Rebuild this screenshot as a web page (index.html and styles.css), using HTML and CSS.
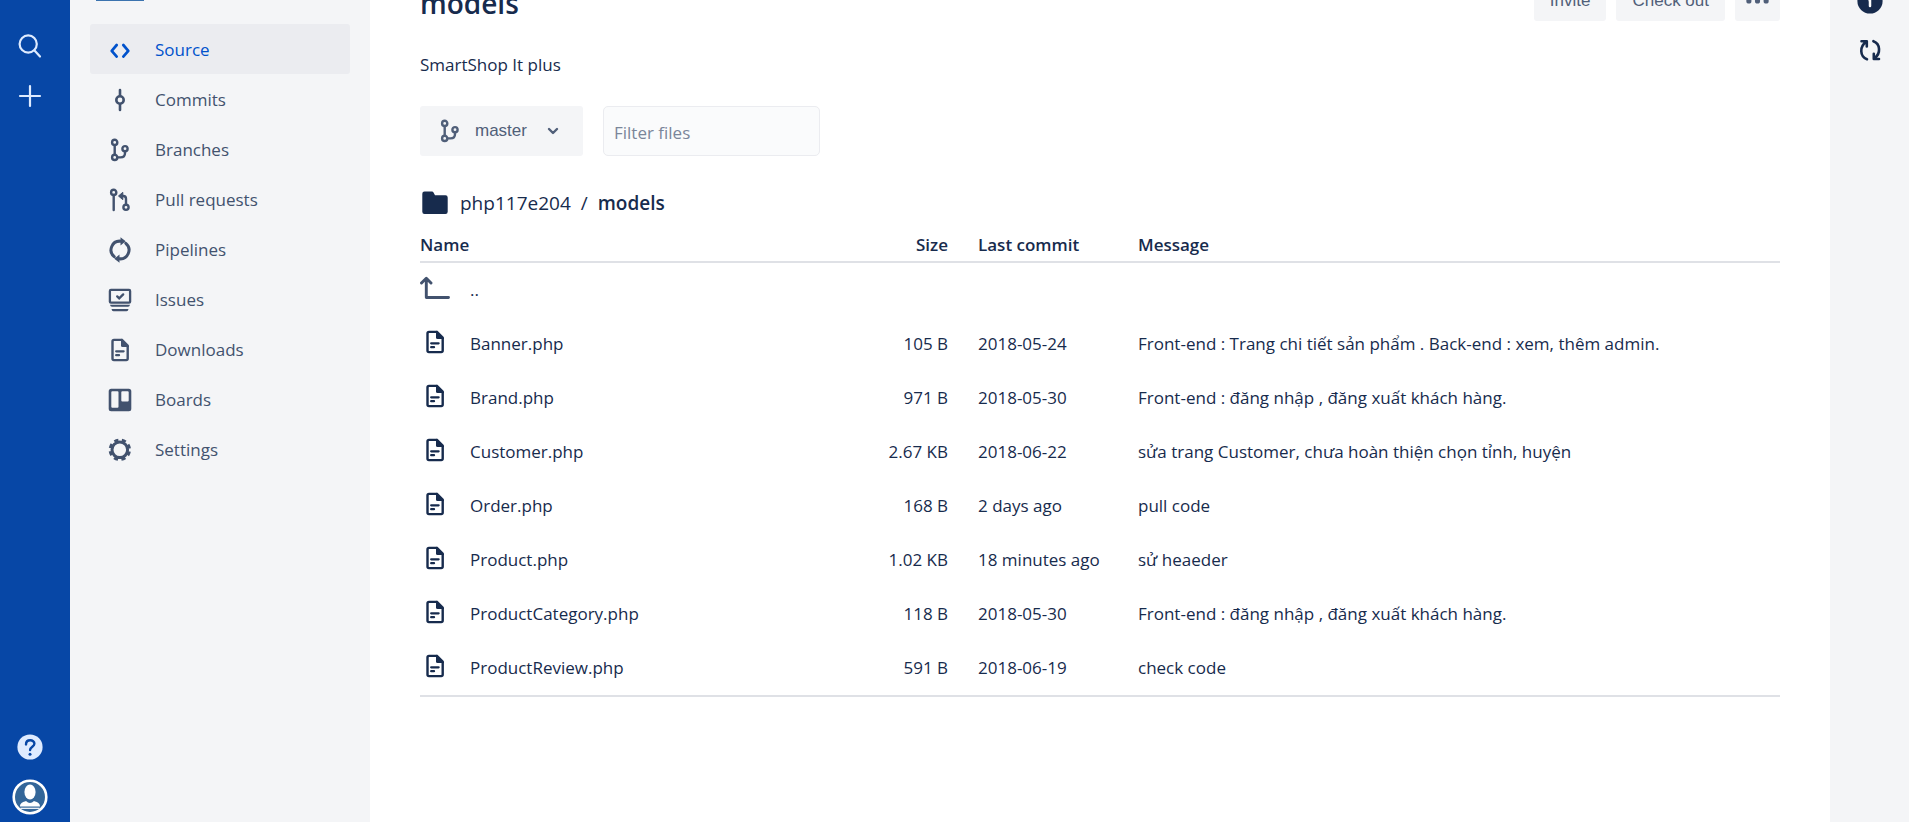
FILE: index.html
```html
<!DOCTYPE html>
<html lang="en">
<head>
<meta charset="utf-8">
<title>models — SmartShop</title>
<link rel="stylesheet" href="styles.css">
</head>
<body>
<svg class="sprite" aria-hidden="true">
  <symbol id="i-doc" viewBox="0 0 30 30">
    <path d="M16.500 4.900H9a1.500 1.500 0 0 0-1.500 1.500v17.200A1.500 1.500 0 0 0 9 25.100h12.200a1.500 1.500 0 0 0 1.500-1.500V12" fill="none" stroke="currentColor" stroke-width="2.400"/>
    <path d="M16 3.700h1.500L24 10.200V12h-6.500a1.500 1.500 0 0 1-1.500-1.500z" fill="currentColor"/>
    <path d="M11.200 16.300h7.400M11.200 20.200h2.800" stroke="currentColor" stroke-width="2.300" stroke-linecap="round"/>
  </symbol>
  <symbol id="i-branch" viewBox="0 0 30 30">
    <g fill="none" stroke="currentColor" stroke-width="2.400">
      <circle cx="9.700" cy="7.400" r="2.600"/><circle cx="9.700" cy="22.400" r="2.600"/><circle cx="20" cy="13.700" r="2.600"/>
      <path d="M9.700 10v9.800M20 16.300v1.700q0 4.400-4.400 4.400h-3.300"/>
    </g>
  </symbol>
</svg>
<div class="app">
  <nav class="rail" aria-label="Global">
    <button class="rail-btn" aria-label="Search"><svg class="icon" viewBox="0 0 30 30"><g fill="none" stroke="currentColor" stroke-width="2.200" stroke-linecap="round"><circle cx="13.200" cy="13" r="8.600"/><path d="M19.500 19.500l5.500 6"/></g></svg></button>
    <button class="rail-btn" aria-label="Create"><svg class="icon" viewBox="0 0 30 30"><path d="M15 5v20M5 15h20" stroke="currentColor" stroke-width="2.200" stroke-linecap="round"/></svg></button>
    <button class="rail-btn rail-bottom" aria-label="Help"><svg class="icon" viewBox="0 0 30 30"><circle cx="15" cy="15" r="12.600" fill="currentColor"/><path d="M11 12.400c0-5.600 8.600-5.100 8.400-.6-.1 3-4.300 2.900-4.300 6.300" fill="none" stroke="#0747a6" stroke-width="2.400" stroke-linecap="round"/><circle cx="15" cy="22.300" r="1.500" fill="#0747a6"/></svg></button>
    <button class="rail-btn" aria-label="Your profile"><svg class="avatar" viewBox="0 0 36 36"><circle cx="18" cy="18" r="16.300" fill="#336699" stroke="#fff" stroke-width="2.600"/><ellipse cx="18" cy="13" rx="5.600" ry="7.400" fill="#fff"/><path d="M8 27.500c0-3.500 3-4.500 6-5.500q4 4 8 0c3 1 6 2 6 5.500z" fill="#fff"/><path d="M8.500 29.300h19" stroke="#fff" stroke-width="1.200"/></svg></button>
  </nav>

  <aside class="sidebar">
    <div class="project-mark"></div>
    <nav aria-label="Repository">
      <a class="nav-item active" href="#"><svg class="icon" viewBox="0 0 30 30"><path d="M11.700 10l-5 5.800 5 5.800M18.300 10l5 5.800-5 5.800" fill="none" stroke="currentColor" stroke-width="2.700" stroke-linecap="round" stroke-linejoin="round"/></svg>Source</a>
      <a class="nav-item" href="#"><svg class="icon" viewBox="0 0 30 30"><g fill="none" stroke="currentColor" stroke-width="2.600" stroke-linecap="round"><circle cx="15" cy="15" r="3.700"/><path d="M15 5v5.500M15 19.500V25"/></g></svg>Commits</a>
      <a class="nav-item" href="#"><svg class="icon"><use href="#i-branch"/></svg>Branches</a>
      <a class="nav-item" href="#"><svg class="icon" viewBox="0 0 30 30"><g fill="none" stroke="currentColor" stroke-width="2.400"><circle cx="8.700" cy="7.400" r="2.600"/><circle cx="21" cy="22.300" r="2.600"/><path d="M8.700 10v15M21 19.700v-6q0-2.700-2.700-2.700H17" stroke-linecap="round"/></g><path d="M13.500 11l4.300-3.700v7.400z" fill="currentColor" stroke="currentColor" stroke-linejoin="round"/></svg>Pull requests</a>
      <a class="nav-item" href="#"><svg class="icon" viewBox="0 0 30 30"><g fill="none" stroke="currentColor" stroke-width="3" stroke-linecap="round"><path d="M9.200 21.700A8.800 8.800 0 0 1 15.800 6.200M20.800 8.300A8.800 8.800 0 0 1 14.200 23.800"/></g><path d="M15.500 2.200l5.200 4-5.200 4.200zM14.500 19.600l-5.200 4.200 5.200 4z" fill="currentColor"/></svg>Pipelines</a>
      <a class="nav-item" href="#"><svg class="icon" viewBox="0 0 30 30"><g fill="none" stroke="currentColor" stroke-width="2.300"><rect x="4.900" y="4.900" width="20.200" height="12.800" rx="1"/><path d="M12.200 11.400l2 2 4-4" stroke-linecap="round"/></g><path d="M5 19.800h20q-.3 2-2 2H7q-1.700 0-2-2zM6.500 23.900h17q-.3 2.400-2 2.400h-13q-1.700 0-2-2.400z" fill="currentColor"/></svg>Issues</a>
      <a class="nav-item" href="#"><svg class="icon"><use href="#i-doc"/></svg>Downloads</a>
      <a class="nav-item" href="#"><svg class="icon" viewBox="0 0 30 30"><path fill="currentColor" fill-rule="evenodd" d="M6.200 3.700h17.600a2.500 2.500 0 0 1 2.500 2.500v17.600a2.500 2.500 0 0 1-2.500 2.500H6.200a2.500 2.500 0 0 1-2.500-2.500V6.200a2.500 2.500 0 0 1 2.500-2.500zM7.300 6.200a1 1 0 0 0-1 1v14.500a1 1 0 0 0 1 1h5.200a1 1 0 0 0 1-1V7.200a1 1 0 0 0-1-1zm10 0a1 1 0 0 0-1 1v8.200a1 1 0 0 0 1 1h5.400a1 1 0 0 0 1-1V7.200a1 1 0 0 0-1-1z"/></svg>Boards</a>
      <a class="nav-item" href="#"><svg class="icon" viewBox="0 0 30 30"><g fill="none" stroke="currentColor"><circle cx="14.800" cy="14.800" r="7.800" stroke-width="3"/><circle cx="14.800" cy="14.800" r="9.800" stroke-width="2.800" stroke-dasharray="4.200 3.497" stroke-dashoffset="-1.750"/></g></svg>Settings</a>
    </nav>
  </aside>

  <main class="content">
    <header class="page-head">
      <h1 class="title">models</h1>
      <div class="actions">
        <button class="btn">Invite</button>
        <button class="btn">Check out</button>
        <button class="btn btn-more" aria-label="More actions"><svg class="dots" viewBox="0 0 24 8"><g fill="currentColor"><circle cx="3" cy="4" r="2.700"/><circle cx="12" cy="4" r="2.700"/><circle cx="21" cy="4" r="2.700"/></g></svg></button>
      </div>
    </header>
    <p class="description">SmartShop It plus</p>
    <div class="toolbar">
      <button class="btn branch"><svg class="icon"><use href="#i-branch"/></svg><span>master</span><svg class="chevron" viewBox="0 0 12 8"><path d="M2 2l4 4 4-4" fill="none" stroke="currentColor" stroke-width="2.400" stroke-linecap="round" stroke-linejoin="round"/></svg></button>
      <input class="filter" type="text" placeholder="Filter files" aria-label="Filter files">
    </div>
    <nav class="crumbs" aria-label="Breadcrumb">
      <svg class="icon" viewBox="0 0 30 30"><path d="M4.500 3.500H12q1 0 1.500 1l1.500 2.700h10.500a2.200 2.200 0 0 1 2.200 2.200v14.400a2.200 2.200 0 0 1-2.200 2.200H4.500a2.200 2.200 0 0 1-2.200-2.200V5.700a2.200 2.200 0 0 1 2.200-2.200z" fill="currentColor"/></svg>
      <a href="#">php117e204</a><span>/</span><strong>models</strong>
    </nav>
    <table class="files">
      <colgroup><col class="c-name"><col class="c-size"><col class="c-commit"><col></colgroup>
      <thead><tr><th>Name</th><th class="size">Size</th><th>Last commit</th><th>Message</th></tr></thead>
      <tbody>
        <tr><td colspan="4"><a class="file" href="#"><svg class="icon up" viewBox="0 0 30 30"><path d="M1.500 10l4.800-4.800L11 10M6.300 6v18.500h22.200" fill="none" stroke="currentColor" stroke-width="2.900" stroke-linecap="round" stroke-linejoin="round"/></svg>..</a></td></tr>
        <tr><td><a class="file" href="#"><svg class="icon"><use href="#i-doc"/></svg>Banner.php</a></td><td class="size">105 B</td><td>2018-05-24</td><td>Front-end : Trang chi tiết sản phẩm . Back-end : xem, thêm admin.</td></tr>
        <tr><td><a class="file" href="#"><svg class="icon"><use href="#i-doc"/></svg>Brand.php</a></td><td class="size">971 B</td><td>2018-05-30</td><td>Front-end : đăng nhập , đăng xuất khách hàng.</td></tr>
        <tr><td><a class="file" href="#"><svg class="icon"><use href="#i-doc"/></svg>Customer.php</a></td><td class="size">2.67 KB</td><td>2018-06-22</td><td>sửa trang Customer, chưa hoàn thiện chọn tỉnh, huyện</td></tr>
        <tr><td><a class="file" href="#"><svg class="icon"><use href="#i-doc"/></svg>Order.php</a></td><td class="size">168 B</td><td>2 days ago</td><td>pull code</td></tr>
        <tr><td><a class="file" href="#"><svg class="icon"><use href="#i-doc"/></svg>Product.php</a></td><td class="size">1.02 KB</td><td>18 minutes ago</td><td>sử heaeder</td></tr>
        <tr><td><a class="file" href="#"><svg class="icon"><use href="#i-doc"/></svg>ProductCategory.php</a></td><td class="size">118 B</td><td>2018-05-30</td><td>Front-end : đăng nhập , đăng xuất khách hàng.</td></tr>
        <tr><td><a class="file" href="#"><svg class="icon"><use href="#i-doc"/></svg>ProductReview.php</a></td><td class="size">591 B</td><td>2018-06-19</td><td>check code</td></tr>
      </tbody>
    </table>
  </main>

  <aside class="side-tools">
    <button class="tool" aria-label="Details"><svg class="icon" viewBox="0 0 30 30"><circle cx="15" cy="15" r="12.600" fill="currentColor"/><path d="M15 14v6" stroke="#fff" stroke-width="2.500" stroke-linecap="round"/><path d="M13.600 14.500h1.400" stroke="#fff" stroke-width="1.500"/><circle cx="15" cy="9.800" r="1.400" fill="#fff"/></svg></button>
    <button class="tool" aria-label="Builds"><svg class="icon" viewBox="0 0 30 30"><g fill="none" stroke="currentColor" stroke-width="2.600" stroke-linecap="round" stroke-linejoin="round"><path d="M12 24.200C4.600 21.500 4.500 11.500 11 7.200M6.500 6.200h5.300v5.300M18.400 6.200c7.200 2.700 7.400 12.400 1.300 16.800M24 24h-5.200v-5.300"/></g></svg></button>
  </aside>
</div>
</body>
</html>
```
FILE: styles.css
```css
* { box-sizing: border-box; }

body {
  margin: 0;
  font-family: "Open Sans", "Noto Sans", sans-serif;
  font-size: 17px;
  line-height: 24px;
  color: #172b4d;
  background: #fff;
}

a { color: inherit; text-decoration: none; }
button { border: 0; padding: 0; background: none; color: inherit; cursor: pointer; }

.sprite { position: absolute; width: 0; height: 0; }
.icon { width: 30px; height: 30px; flex: none; display: block; }

.app { display: flex; height: 100vh; overflow: hidden; }

/* Global rail */
.rail {
  flex: none;
  width: 70px;
  padding: 21px 10px 0 0;
  display: flex;
  flex-direction: column;
  align-items: center;
  background: #0747a6;
  color: #deebff;
}
.rail-btn {
  width: 50px;
  height: 50px;
  display: grid;
  place-items: center;
}
.rail-bottom { margin-top: auto; }
.avatar { width: 36px; height: 36px; display: block; }

/* Repository navigation */
.sidebar {
  flex: none;
  width: 300px;
  padding: 0 20px;
  background: #f4f5f7;
  color: #42526e;
}
.project-mark {
  width: 48px;
  height: 1px;
  margin: 0 6px 23px;
  background: #3b73af;
}
.nav-item {
  height: 50px;
  padding: 1px 15px 0;
  display: flex;
  align-items: center;
  gap: 20px;
  border-radius: 3px;
}
.nav-item.active { background: #ebecf0; color: #0052cc; }

/* Main column */
.content { flex: 1; min-width: 0; padding: 0 50px; }
.page-head {
  margin-top: -19px;
  display: flex;
  justify-content: space-between;
  align-items: flex-start;
}
.title {
  margin: 0;
  font-size: 28px;
  line-height: 44px;
  font-weight: 600;
}
.actions { display: flex; gap: 10px; }
.btn {
  height: 40px;
  padding: 0 16px;
  border-radius: 3px;
  background: #f4f5f7;
  color: #505f79;
  font-family: "Liberation Sans", Arial, sans-serif;
  font-size: 17px;
}
.btn-more { padding: 0 11px; }
.dots { width: 23px; height: 8px; display: block; }

.description { margin: 28px 0 29px; }

.toolbar { display: flex; gap: 20px; }
.branch {
  height: 50px;
  padding: 0 24px 0 15px;
  display: flex;
  align-items: center;
}
.branch span { margin: 0 20px 0 10px; }
.chevron { width: 12px; height: 8px; }
.filter {
  width: 217px;
  height: 50px;
  padding: 2px 10px 0;
  border: 1px solid #ebecf0;
  border-radius: 5px;
  background: #fafbfc;
  color: inherit;
  font: inherit;
}
.filter::placeholder { color: #7a869a; opacity: 1; }

.crumbs {
  margin-top: 31px;
  display: flex;
  align-items: center;
  gap: 10px;
  font-size: 19px;
  line-height: 32px;
}
.crumbs strong { font-weight: 600; }

.files {
  width: 100%;
  margin-top: 14px;
  border-collapse: separate;
  border-spacing: 0;
  table-layout: fixed;
  border-bottom: 2px solid #dfe1e6;
}
.c-name { width: 30%; }
.c-size { width: 150px; }
.c-commit { width: 160px; }
.files th {
  padding: 0 0 4px;
  text-align: left;
  font-weight: 600;
  border-bottom: 2px solid #dfe1e6;
}
.files td { height: 54px; padding: 0; }
.files .size { text-align: right; padding-right: 30px; }
.file { display: flex; align-items: center; gap: 20px; }
.file .icon { margin-bottom: 4px; }
.up { color: #42526e; }

/* Right-hand tools */
.side-tools {
  flex: none;
  width: 79px;
  background: #f4f5f7;
}
.tool {
  width: 100%;
  height: 49px;
  display: grid;
  place-items: center;
}
.tool:first-child { margin-top: -24px; }
```
